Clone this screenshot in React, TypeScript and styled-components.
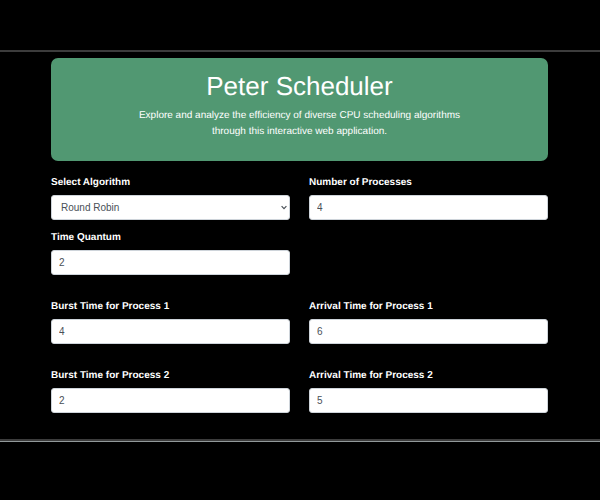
import React, { useState } from "react";
import styled, { createGlobalStyle } from "styled-components";

const GlobalStyle = createGlobalStyle`
  *, *::before, *::after { box-sizing: border-box; }
  body {
    margin: 0;
    background: #000;
    color: #fff;
    font-family: "Liberation Sans", Arial, sans-serif;
    font-size: 10px;
    line-height: 16px;
    text-rendering: geometricPrecision;
  }
`;

const Page = styled.div`
  padding: 50px 0;
`;

const Frame = styled.main`
  border-top: 2px solid #3c3c3c;
  border-bottom: 1px solid #92999a;
  padding-top: 6px;
  &::after {
    content: "";
    display: block;
    height: 2px;
    background: #3c3c3c;
  }
`;

const Content = styled.div`
  padding: 0 52px 26px 51px;
`;

const Banner = styled.header`
  background: #519872;
  border-radius: 7px;
  padding: 12px 72px 21px;
  text-align: center;
`;

const Title = styled.h1`
  margin: 0 0 6px;
  font-size: 26px;
  line-height: 32px;
  font-weight: 400;
`;

const Lead = styled.p`
  margin: 0;
`;

const Form = styled.form`
  display: grid;
  grid-template-columns: 1fr 1fr;
  column-gap: 19px;
  padding-top: 14px;
`;

const Field = styled.div<{ $group?: boolean; $start?: boolean }>`
  display: flex;
  flex-direction: column;
  gap: 4px;
  margin-top: ${(p) => (p.$group ? 24 : p.$start ? 0 : 10)}px;
`;

const Label = styled.label`
  font-weight: 700;
`;

const controlStyle = `
  width: 100%;
  height: 25px;
  margin: 0;
  border: 1px solid #ced4da;
  border-radius: 3px;
  background: #fff;
  color: #495057;
  font: inherit;
`;

const Input = styled.input`
  ${controlStyle}
  padding: 0 7px;
`;

const SelectBox = styled.div`
  position: relative;
  svg {
    position: absolute;
    right: 3px;
    top: 10px;
    pointer-events: none;
  }
`;

const Select = styled.select`
  ${controlStyle}
  display: block;
  appearance: none;
  padding: 0 16px 0 9px;
`;

interface NumberFieldProps {
  id: string;
  label: string;
  initial: string;
  group?: boolean;
  start?: boolean;
}

function NumberField({ id, label, initial, group, start }: NumberFieldProps) {
  const [value, setValue] = useState(initial);
  return (
    <Field $group={group} $start={start}>
      <Label htmlFor={id}>{label}</Label>
      <Input id={id} inputMode="numeric" value={value} onChange={(e) => setValue(e.target.value)} />
    </Field>
  );
}

const processes = [
  { id: 1, burst: "4", arrival: "6" },
  { id: 2, burst: "2", arrival: "5" },
];

export default function App() {
  return (
    <Page>
      <GlobalStyle />
      <Frame>
        <Content>
          <Banner>
            <Title>Peter Scheduler</Title>
            <Lead>
              Explore and analyze the efficiency of diverse CPU scheduling algorithms through this
              interactive web application.
            </Lead>
          </Banner>
          <Form>
            <Field $start>
              <Label htmlFor="algorithm">Select Algorithm</Label>
              <SelectBox>
                <Select id="algorithm" defaultValue="Round Robin">
                  <option>Round Robin</option>
                </Select>
                <svg width="6" height="5" viewBox="0 0 6 5" aria-hidden="true">
                  <path d="M.6 1.2 3 3.6 5.4 1.2" fill="none" stroke="#495057" strokeWidth="1.2" />
                </svg>
              </SelectBox>
            </Field>
            <NumberField id="count" label="Number of Processes" initial="4" start />
            <NumberField id="quantum" label="Time Quantum" initial="2" />
            <span />
            {processes.map((p) => (
              <React.Fragment key={p.id}>
                <NumberField id={`burst-${p.id}`} label={`Burst Time for Process ${p.id}`} initial={p.burst} group />
                <NumberField id={`arrival-${p.id}`} label={`Arrival Time for Process ${p.id}`} initial={p.arrival} group />
              </React.Fragment>
            ))}
          </Form>
        </Content>
      </Frame>
    </Page>
  );
}
